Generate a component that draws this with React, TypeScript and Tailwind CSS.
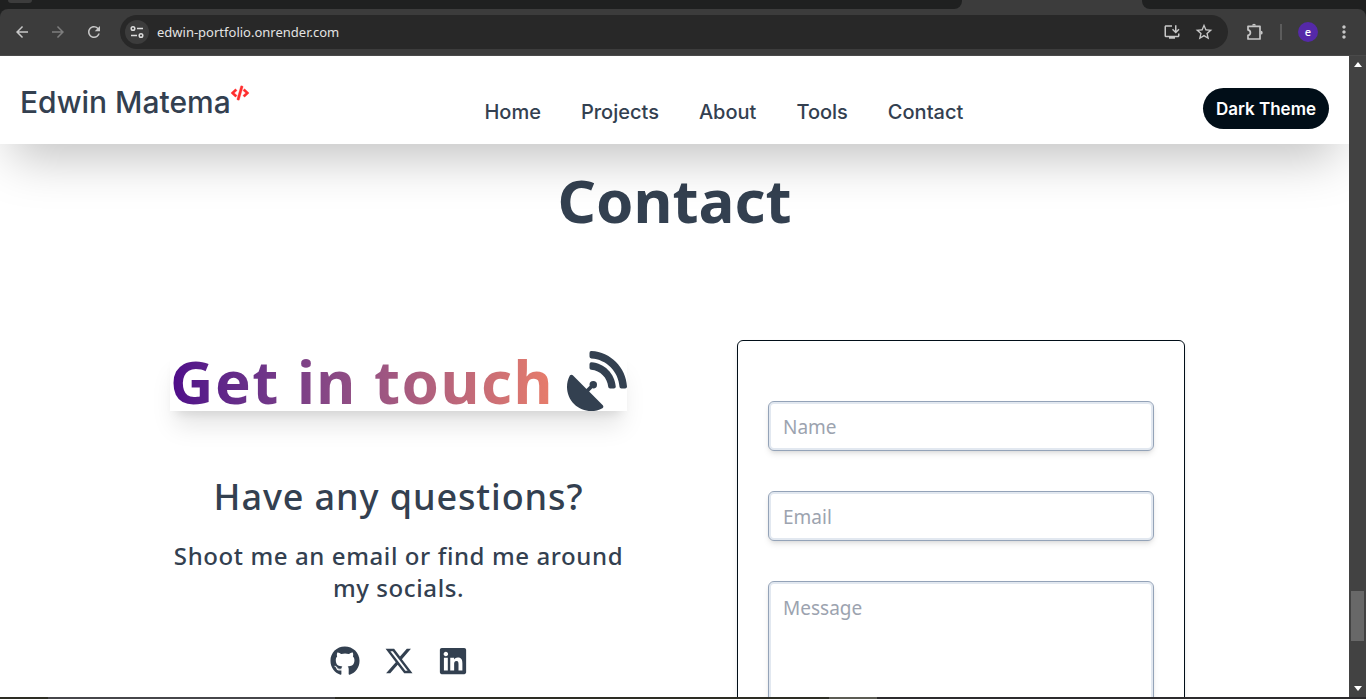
import React from "react";
import { FaCode, FaGithub, FaLinkedin, FaSatelliteDish } from "react-icons/fa";
import { FaXTwitter } from "react-icons/fa6";
import {
  MdArrowBack,
  MdArrowForward,
  MdRefresh,
  MdStarBorder,
  MdMoreVert,
  MdOutlineInstallDesktop,
} from "react-icons/md";

function TabStrip() {
  return (
    <div className="flex h-[9px] shrink-0 bg-[#3c3c3c]">
      <div className="flex grow-[962] basis-0 items-start overflow-hidden rounded-br-lg bg-[#1f2020]">
        <div className="ml-2 h-[3px] w-6 rounded-b-lg bg-[#3c3c3c]" />
      </div>
      <div className="grow-[180] basis-0" />
      <div className="grow-[224] basis-0 rounded-bl-lg bg-[#1f2020]" />
    </div>
  );
}

function SiteInfoIcon() {
  return (
    <svg viewBox="0 0 16 16" className="size-4" fill="none" stroke="#dcdcdc" strokeWidth="1.5">
      <circle cx="4" cy="4.5" r="1.8" />
      <path d="M8 4.5h6M2 11.5h6" />
      <circle cx="12" cy="11.5" r="1.8" />
    </svg>
  );
}

function ExtensionIcon() {
  return (
    <svg viewBox="0 0 20 20" className="size-5" fill="none" stroke="currentColor" strokeWidth="1.7" strokeLinejoin="round">
      <path d="M4 4.300H16V17H4V13.400C5.500 13 6.400 12 6.400 10.650S5.500 8.300 4 7.900Z" />
      <path d="M8.100 3.600a1.900 1.900 0 0 1 3.800 0ZM16.800 8.800a1.900 1.900 0 0 1 0 3.800Z" fill="currentColor" stroke="none" />
    </svg>
  );
}

function Toolbar() {
  return (
    <div className="shrink-0 bg-[#1f2020]">
      <div className="flex h-[47px] items-center rounded-t-lg border-b border-[#4a4a4a] bg-[#3c3c3c] pr-3 pl-3">
        <div className="flex items-center gap-4 text-xl">
          <button aria-label="Back" className="text-[#c7c7c7]">
            <MdArrowBack className="size-5 p-px" />
          </button>
          <button aria-label="Forward" className="text-[#7d7d7d]">
            <MdArrowForward className="size-5 p-px" />
          </button>
          <button aria-label="Reload" className="text-[#c7c7c7]">
            <MdRefresh className="size-5 p-px" />
          </button>
        </div>
        <div className="ml-4 flex h-[34px] grow items-center rounded-full bg-[#282828] pr-[14px] pl-[5px]">
          <button aria-label="Site information" className="grid size-6 place-items-center rounded-full bg-[#3c3c3c]">
            <SiteInfoIcon />
          </button>
          <input
            aria-label="Address"
            defaultValue="edwin-portfolio.onrender.com"
            className="ml-2 min-w-0 grow bg-transparent pt-0.5 font-['Noto_Sans',sans-serif] text-[13px] text-[#e3e3e3] outline-none"
          />
          <div className="flex items-center gap-3 text-[#c7c7c7]">
            <button aria-label="Install app">
              <MdOutlineInstallDesktop className="size-5 p-px" />
            </button>
            <button aria-label="Bookmark">
              <MdStarBorder className="size-5" />
            </button>
          </div>
        </div>
        <div className="ml-4 flex items-center text-[#c7c7c7]">
          <button aria-label="Extensions">
            <ExtensionIcon />
          </button>
          <div className="ml-4 h-4 w-0.5 bg-[#5c5c5c]" />
          <button
            aria-label="Profile"
            className="ml-4 size-5 rounded-full bg-[#5529a8] text-center font-['Noto_Sans',sans-serif] text-[11px] leading-4 font-medium text-white"
          >
            e
          </button>
          <button aria-label="Menu" className="ml-4">
            <MdMoreVert className="size-5" />
          </button>
        </div>
      </div>
    </div>
  );
}

const links = ["Home", "Projects", "About", "Tools", "Contact"];

function Header() {
  return (
    <header className="relative z-10 flex h-[88px] shrink-0 items-center justify-between bg-white px-5 font-[Inter,sans-serif] text-[#334050] shadow-[0_25px_50px_-12px_rgba(0,0,0,0.25)]">
      <a href="#home" className="flex items-start pt-1 text-[30px] leading-9 font-medium">
        Edwin Matema
        <FaCode className="size-[18px] overflow-visible text-[#ff2d2d]" stroke="currentColor" strokeWidth="12" />
      </a>
      <nav className="mt-6 flex gap-10 pr-1 text-xl leading-7 font-medium">
        {links.map((label) => (
          <a key={label} href={`#${label.toLowerCase()}`}>
            {label}
          </a>
        ))}
      </nav>
      <button className="mt-4 rounded-full bg-[#010e18] px-[13px] pt-[9px] pb-[7px] text-[17px] leading-[25px] font-semibold text-white">
        Dark Theme
      </button>
    </header>
  );
}

const field =
  "block w-full rounded-md border border-[#94a3b8] bg-white px-[14px] text-[19px] text-[#334050] placeholder-[#9ca3af] shadow-[0_4px_6px_-1px_rgba(0,0,0,0.1),0_2px_4px_-2px_rgba(0,0,0,0.1)] ring-2 ring-[#e2e8f0] ring-inset outline-none";

function ContactForm() {
  return (
    <form className="flex h-[520px] w-[448px] flex-col gap-10 rounded-md border border-[#010e18] px-[30px] pt-[60px] shadow-md">
      <input aria-label="Name" placeholder="Name" className={`${field} h-[50px] pt-0.5`} />
      <input aria-label="Email" placeholder="Email" className={`${field} h-[50px] pt-0.5`} />
      <textarea aria-label="Message" placeholder="Message" className={`${field} h-44 resize-none pt-3 leading-7`} />
    </form>
  );
}

function Socials() {
  return (
    <div className="mt-[42px] flex items-center justify-center gap-6 text-3xl">
      <a href="#github" aria-label="GitHub">
        <FaGithub />
      </a>
      <a href="#x" aria-label="X">
        <FaXTwitter />
      </a>
      <a href="#linkedin" aria-label="LinkedIn">
        <FaLinkedin />
      </a>
    </div>
  );
}

function ContactSection() {
  return (
    <main className="flex grow flex-col items-center overflow-hidden font-['Noto_Sans',sans-serif] text-[#334050]">
      <h1 className="mt-[26px] text-6xl leading-[60px] font-bold">Contact</h1>
      <div className="mt-[110px] flex w-full justify-center gap-[110px] pl-[6px]">
        <div className="flex w-[457px] flex-col text-center">
          <div className="mt-[11px] flex h-[60px] items-center justify-between shadow-xl">
            <h2 className="bg-linear-to-r from-[#4f0a8a] to-[#e87d6a] bg-clip-text text-6xl leading-[60px] font-bold tracking-wide whitespace-nowrap text-transparent">
              Get in touch
            </h2>
            <FaSatelliteDish className="size-[60px] shrink-0" />
          </div>
          <h3 className="mt-[66px] text-4xl leading-10 font-medium tracking-wide whitespace-nowrap">Have any questions?</h3>
          <p className="mt-[23px] text-2xl leading-8 font-medium tracking-wide">
            Shoot me an email or find me around my socials.
          </p>
          <Socials />
        </div>
        <ContactForm />
      </div>
    </main>
  );
}

function Scrollbar() {
  return (
    <div className="flex w-[17px] shrink-0 flex-col items-center bg-[#424242] py-[6px]">
      <svg viewBox="0 0 8 5" className="h-[5px] w-2" fill="#ffffff">
        <path d="M4 0L8 5H0z" />
      </svg>
      <div className="grow-[524] basis-0" />
      <div className="h-[50px] w-[13px] bg-[#686868]" />
      <div className="grow-[45] basis-0" />
      <svg viewBox="0 0 8 5" className="h-[5px] w-2" fill="#ffffff">
        <path d="M0 0H8L4 5z" />
      </svg>
    </div>
  );
}

export default function App() {
  return (
    <div className="flex h-screen flex-col overflow-hidden bg-white">
      <TabStrip />
      <Toolbar />
      <div className="flex min-h-0 grow">
        <div className="flex min-w-0 grow flex-col overflow-hidden">
          <Header />
          <ContactSection />
        </div>
        <Scrollbar />
      </div>
      <div className="flex h-0.5 shrink-0 bg-[#2d2d24]">
        <div className="grow-[48] basis-0" />
        <div className="grow-[287] basis-0 bg-[#46464a]" />
        <div className="grow-[494] basis-0" />
        <div className="grow-[48] basis-0 bg-[#5c5c54]" />
        <div className="grow-[489] basis-0 bg-[#2c2b2d]" />
      </div>
    </div>
  );
}
